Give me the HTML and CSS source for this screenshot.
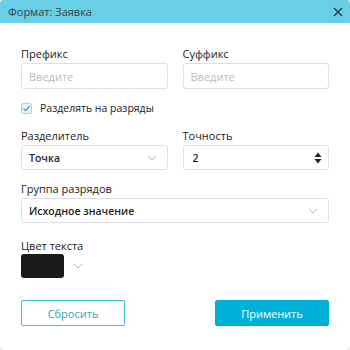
FILE: index.html
```html
<!DOCTYPE html>
<html lang="ru">
<head>
<meta charset="utf-8">
<link rel="stylesheet" href="styles.css">
</head>
<body>
<div class="dialog">
  <div class="titlebar">
    <span class="title">Формат: Заявка</span>
    <svg class="close" width="10" height="10" viewBox="0 0 10 10"><path d="M1 1L9 9M9 1L1 9" stroke="#2b3a40" stroke-width="1.4"/></svg>
  </div>
  <div class="body">
    <div class="row">
      <div class="field">
        <div class="label">Префикс</div>
        <div class="input placeholder">Введите</div>
      </div>
      <div class="field">
        <div class="label">Суффикс</div>
        <div class="input placeholder">Введите</div>
      </div>
    </div>
    <div class="check">
      <span class="box"><svg width="9" height="9" viewBox="0 0 9 9"><path d="M1.5 4.6L3.6 6.6L7.6 2.2" fill="none" stroke="#2aa7cf" stroke-width="1.3"/></svg></span>
      <span>Разделять на разряды</span>
    </div>
    <div class="row">
      <div class="field">
        <div class="label">Разделитель</div>
        <div class="input value">Точка<svg class="chev" width="10" height="6" viewBox="0 0 10 6"><path d="M1 1L5 5L9 1" fill="none" stroke="#a9b4c0" stroke-width="1"/></svg></div>
      </div>
      <div class="field">
        <div class="label">Точность</div>
        <div class="input value num">2<svg class="spin" width="8" height="12" viewBox="0 0 8 12"><path d="M4 0.5L7.5 5H0.5Z M4 11.5L7.5 7H0.5Z" fill="#222"/></svg></div>
      </div>
    </div>
    <div class="field full">
      <div class="label">Группа разрядов</div>
      <div class="input value">Исходное значение<svg class="chev" width="10" height="6" viewBox="0 0 10 6"><path d="M1 1L5 5L9 1" fill="none" stroke="#a9b4c0" stroke-width="1"/></svg></div>
    </div>
    <div class="field color">
      <div class="label">Цвет текста</div>
      <div class="colorrow">
        <span class="swatch"></span>
        <svg width="10" height="6" viewBox="0 0 10 6"><path d="M1 1L5 5L9 1" fill="none" stroke="#a9b4c0" stroke-width="1"/></svg>
      </div>
    </div>
    <div class="buttons">
      <button class="btn reset">Сбросить</button>
      <button class="btn apply">Применить</button>
    </div>
  </div>
</div>
</body>
</html>
```
FILE: styles.css
```css
html, body {
  margin: 0;
  padding: 0;
  background: #ececec;
}
body {
  font-family: "Open Sans", "Noto Sans", sans-serif;
  color: #222;
}
.dialog {
  width: 350px;
  height: 350px;
  background: #fff;
  border-radius: 4px 4px 6px 6px;
  overflow: hidden;
  box-sizing: border-box;
}
.titlebar {
  height: 23px;
  background: #68cfe6;
  display: flex;
  align-items: center;
  justify-content: space-between;
  padding: 0 7px 0 8px;
}
.title {
  font-size: 11px;
  color: #33444b;
}
.close {
  display: block;
}
.body {
  padding: 23px 21px 0 21px;
}
.row {
  display: flex;
  gap: 15px;
}
.row .field {
  flex: 1;
}
.label {
  font-size: 11px;
  line-height: 16px;
  color: #222;
  margin-bottom: 1px;
}
.input {
  height: 26px;
  box-sizing: border-box;
  border: 1px solid #dcdfe6;
  border-radius: 3px;
  display: flex;
  align-items: center;
  padding: 0 7px;
  font-size: 11px;
  justify-content: space-between;
}
.placeholder {
  color: #b9bec6;
}
.value {
  font-weight: 600;
  font-size: 10.5px;
  color: #1e1e1e;
  height: 25px;
}
.num {
  padding-left: 9px;
  padding-right: 6px;
}
.chev {
  margin-right: 3px;
}
.check {
  display: flex;
  align-items: center;
  gap: 8px;
  margin-top: 12px;
  font-size: 10.5px;
  color: #222;
  margin-bottom: 13px;
}
.box {
  width: 11px;
  height: 11px;
  box-sizing: border-box;
  border: 1px solid #9fd6ea;
  background: #e6f4fa;
  border-radius: 2px;
  display: flex;
  align-items: center;
  justify-content: center;
}
.box svg { display: block; }
.full {
  margin-top: 11px;
}
.color {
  margin-top: 15px;
}
.color .label {
  margin-bottom: 0;
}
.colorrow {
  display: flex;
  align-items: center;
  gap: 9px;
}
.swatch {
  width: 43px;
  height: 24px;
  background: #1a1a1a;
  border-radius: 3px;
  display: block;
}
.buttons {
  display: flex;
  justify-content: space-between;
  margin-top: 22px;
}
.btn {
  height: 26px;
  box-sizing: border-box;
  font-family: "Open Sans", "Noto Sans", sans-serif;
  font-size: 11px;
  border-radius: 2px;
  cursor: pointer;
}
.reset {
  width: 104px;
  background: #fff;
  border: 1px solid #3cc3df;
  color: #2ea2c8;
}
.apply {
  width: 114px;
  background: #00b1d7;
  border: 1px solid #00b1d7;
  color: #fff;
}
```
